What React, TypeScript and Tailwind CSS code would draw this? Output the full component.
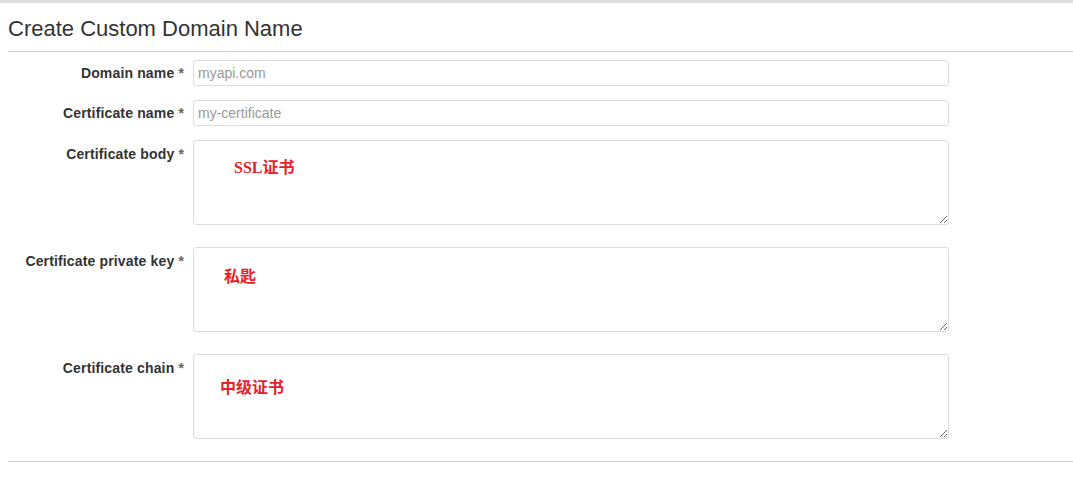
import React from "react";

const labelCls =
  "w-[176px] shrink-0 text-right text-[14px] font-bold text-[#333] leading-[20px] tracking-[0.15px]";

function Label({ text }: { text: string }) {
  return (
    <div className={labelCls}>
      {text} <span className="text-[#666]">*</span>
    </div>
  );
}

function InputRow({ label, placeholder }: { label: string; placeholder: string }) {
  return (
    <div className="flex items-start mb-[14px]">
      <div className="pt-[3px]">
        <Label text={label} />
      </div>
      <input
        className="ml-[9px] w-[756px] h-[26px] border border-[#dcdcdc] rounded-[3px] px-[4px] text-[14px] text-[#333] placeholder:text-[#999] outline-none"
        style={{ fontFamily: '"Liberation Sans", Arial, sans-serif' }}
        placeholder={placeholder}
      />
    </div>
  );
}

function AreaRow({
  label,
  note,
  left,
  top,
}: {
  label: string;
  note: string;
  left: number;
  top: number;
}) {
  return (
    <div className="flex items-start mb-[22px]">
      <div className="pt-[4px]">
        <Label text={label} />
      </div>
      <div className="relative ml-[9px]">
        <textarea className="block w-[756px] h-[85px] border border-[#dcdcdc] rounded-[3px] outline-none resize-y" />
        <span
          className="absolute text-[16px] font-bold text-[#e8202a] leading-[20px] whitespace-nowrap"
          style={{
            left,
            top,
            fontFamily: '"Liberation Serif", "Noto Sans CJK SC", serif',
          }}
        >
          {note}
        </span>
      </div>
    </div>
  );
}

export default function App() {
  return (
    <div
      className="w-[1073px] h-[479px] bg-white overflow-hidden"
      style={{ fontFamily: '"Liberation Sans", Arial, sans-serif' }}
    >
      <div className="h-[3px] bg-[#dedede]" />
      <div className="ml-[8px]">
        <h1 className="text-[22px] text-[#333] leading-[26px] pt-[13px] pb-[9px] border-b border-[#cccccc]">
          Create Custom Domain Name
        </h1>
        <div className="pt-[8px]">
          <InputRow label="Domain name" placeholder="myapi.com" />
          <InputRow label="Certificate name" placeholder="my-certificate" />
          <AreaRow label="Certificate body" note="SSL证书" left={41} top={18} />
          <AreaRow label="Certificate private key" note="私匙" left={31} top={20} />
          <AreaRow label="Certificate chain" note="中级证书" left={27} top={24} />
          <div className="h-px bg-[#cccccc]" />
        </div>
      </div>
    </div>
  );
}
